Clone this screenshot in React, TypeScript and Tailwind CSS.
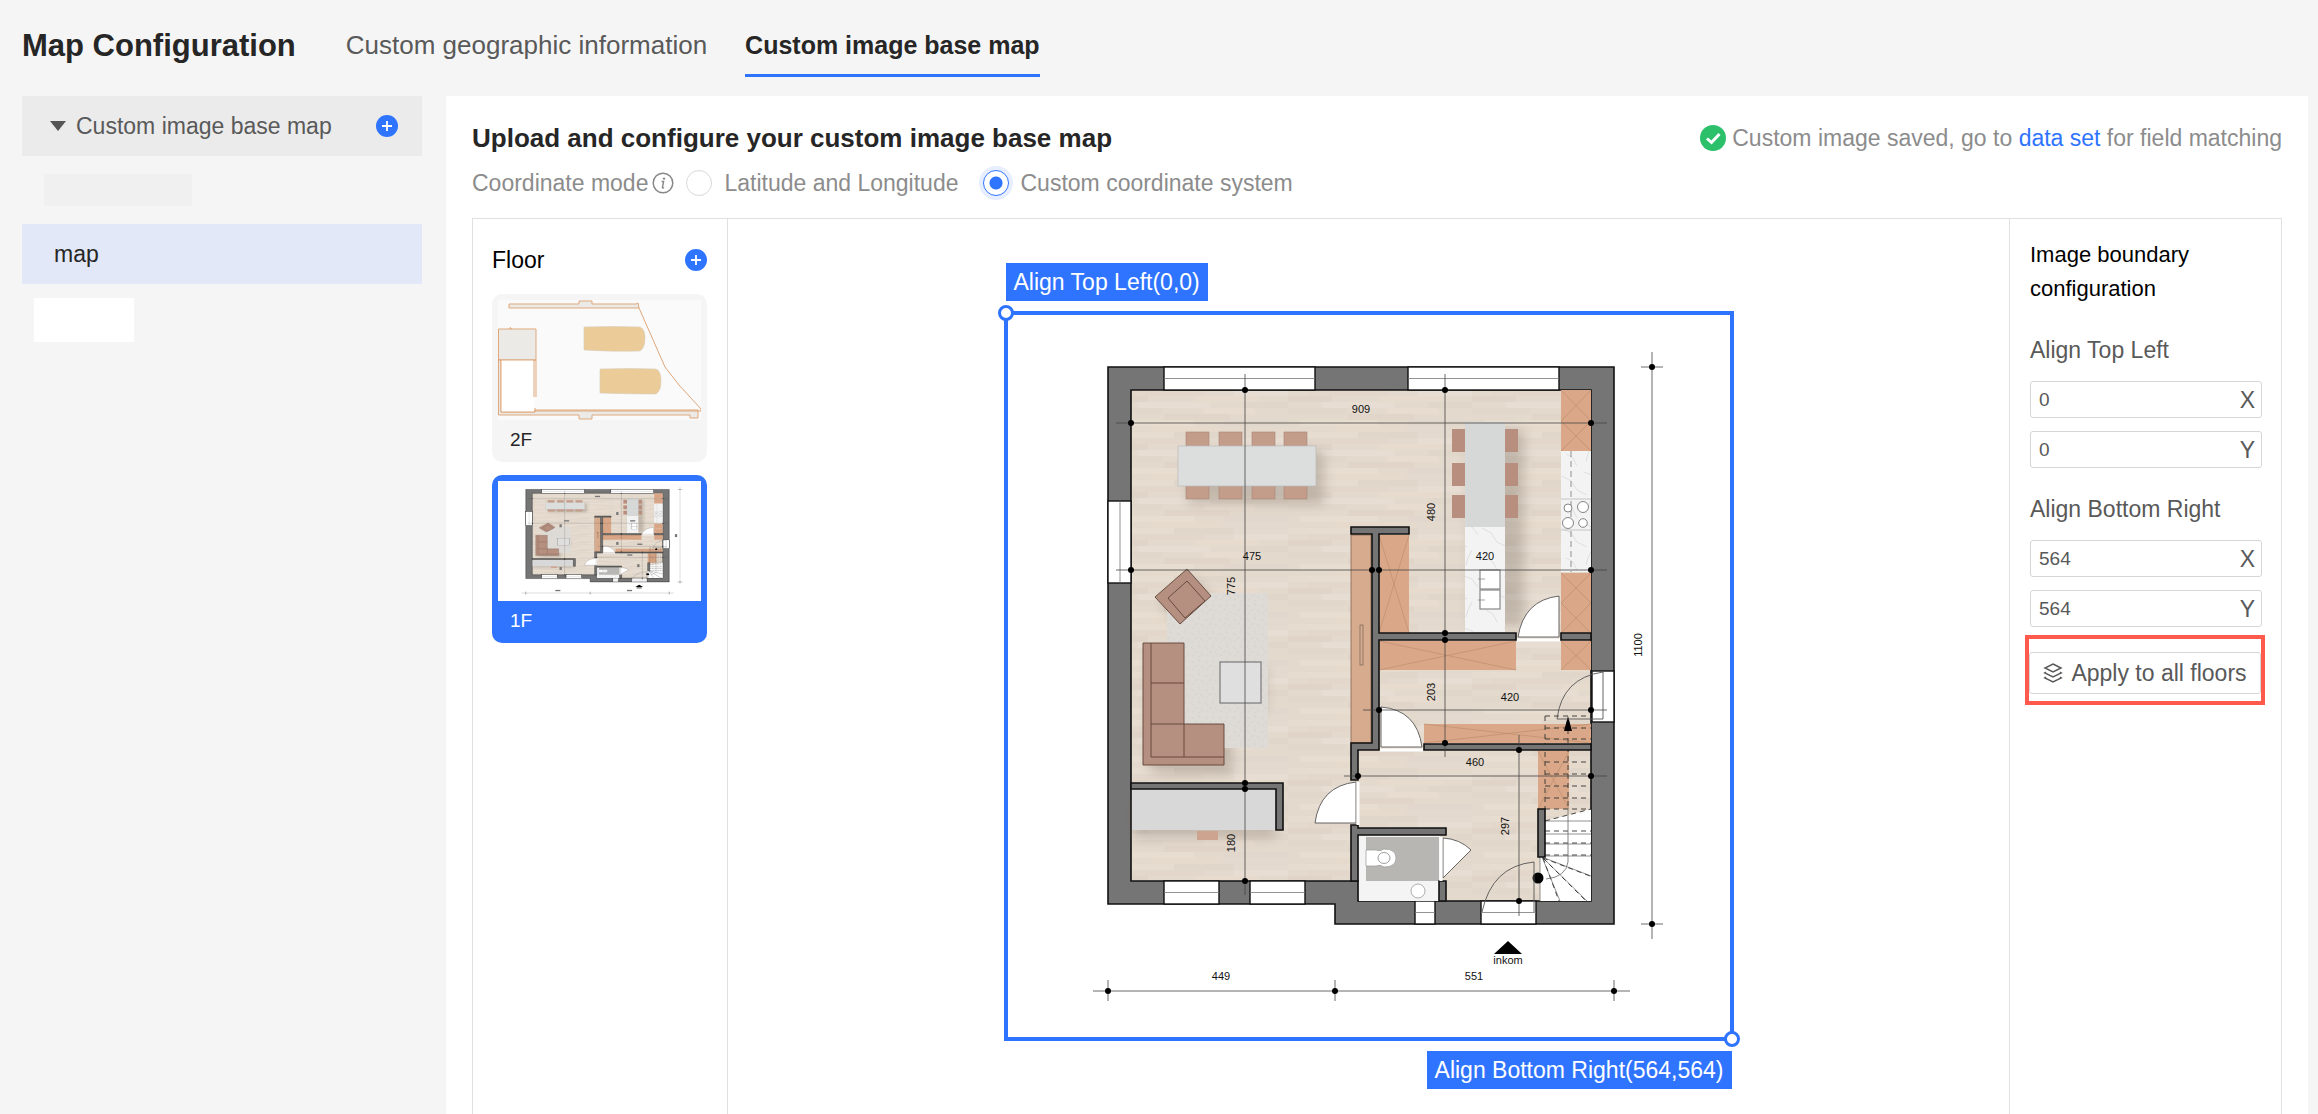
import { useId, useState } from 'react';

const floors = [
  { id: '2', name: '2F' },
  { id: '1', name: '1F' }
];

const planLabels = [
  { x: 1361, y: 413, text: '909' },
  { x: 1252, y: 560, text: '475' },
  { x: 1485, y: 560, text: '420' },
  { x: 1510, y: 701, text: '420' },
  { x: 1475, y: 766, text: '460' },
  { x: 1221, y: 980, text: '449' },
  { x: 1474, y: 980, text: '551' },
  { x: 1235, y: 586, text: '775', vertical: true },
  { x: 1235, y: 843, text: '180', vertical: true },
  { x: 1435, y: 512, text: '480', vertical: true },
  { x: 1435, y: 692, text: '203', vertical: true },
  { x: 1509, y: 826, text: '297', vertical: true },
  { x: 1642, y: 645, text: '1100', vertical: true },
  { x: 1508, y: 964, text: 'inkom' }
];

const planDots = [
  [1131, 423], [1591, 423], [1131, 570], [1372, 570], [1379, 570], [1591, 570],
  [1245, 390], [1245, 783], [1245, 789], [1245, 881],
  [1445, 390], [1445, 633], [1445, 640], [1445, 743],
  [1379, 710], [1591, 710], [1358, 776], [1591, 776], [1519, 750], [1519, 901],
  [1652, 367], [1652, 924], [1108, 991], [1335, 991], [1614, 991]
];

const crossedCabinets = [
  [1379, 535, 30, 98], [1561, 390, 30, 31], [1561, 421, 30, 30], [1561, 573, 30, 30],
  [1561, 603, 30, 30], [1379, 641, 137, 29], [1561, 641, 30, 29], [1424, 724, 167, 19],
  [1538, 751, 31, 58]
];

const horizontalWindows = [
  [1164, 367, 151, 23], [1408, 367, 151, 23], [1164, 881, 55, 23], [1250, 881, 55, 23],
  [1415, 901, 20, 23], [1481, 901, 55, 23]
];

function FloorPlan({ viewBox, thumbnail, className }: { viewBox: string; thumbnail?: boolean; className?: string }) {
  const id = useId();
  const wood = `${id}-wood`;
  const soft = `${id}-soft`;
  const rug = `${id}-rug`;
  const marble = `${id}-marble`;

  return (
    <svg
      viewBox={viewBox}
      preserveAspectRatio={thumbnail ? 'none' : 'xMidYMid meet'}
      className={className}
      role="img"
      aria-label="1F"
    >
      <defs>
        <pattern id={wood} width="184" height="48" patternUnits="userSpaceOnUse">
          <rect width="184" height="48" fill="#e4d9cd" />
          <rect x="0" y="0" width="70" height="6" fill="#e7dcd0" />
          <rect x="70" y="0" width="60" height="6" fill="#e1d6ca" />
          <rect x="20" y="6" width="80" height="6" fill="#e2d7ca" />
          <rect x="130" y="6" width="54" height="6" fill="#e7ddd2" />
          <rect x="0" y="12" width="44" height="6" fill="#e0d4c8" />
          <rect x="90" y="12" width="64" height="6" fill="#e6dbcd" />
          <rect x="34" y="18" width="72" height="6" fill="#e7ddd2" />
          <rect x="140" y="18" width="44" height="6" fill="#e1d6ca" />
          <rect x="0" y="24" width="58" height="6" fill="#e2d7cb" />
          <rect x="100" y="24" width="50" height="6" fill="#e7dccf" />
          <rect x="60" y="30" width="66" height="6" fill="#e1d5c9" />
          <rect x="12" y="36" width="78" height="6" fill="#e7ddd1" />
          <rect x="120" y="36" width="64" height="6" fill="#e2d7cc" />
          <rect x="46" y="42" width="70" height="6" fill="#e5dacc" />
        </pattern>
        <pattern id={rug} width="14" height="14" patternUnits="userSpaceOnUse">
          <rect width="14" height="14" fill="#dedbd7" />
          <path d="M1 3l3 2M8 1l2 3M5 9l3-2M11 8l2 3M2 12l2-1M9 12l1 1" stroke="#d8d5d1" strokeWidth="1.2" />
        </pattern>
        <pattern id={marble} width="40" height="52" patternUnits="userSpaceOnUse">
          <rect width="40" height="52" fill="#f3f3f4" />
          <path d="M2 8l9 5 6 9 10 5M24 4l8 3 6 8M6 38l7 4 4 8M32 30l-4 8-2 7" stroke="#dcdcde" strokeWidth="0.9" fill="none" />
        </pattern>
        <filter id={soft} x="-30%" y="-30%" width="160%" height="160%">
          <feGaussianBlur stdDeviation="6" />
        </filter>
      </defs>

      {/* outer walls and floor */}
      <path d="M1108 367H1614V924H1335V904H1108Z" fill="#757575" stroke="#111" strokeWidth="1.6" />
      <path d="M1131 390H1591V901H1358V881H1131Z" fill={`url(#${wood})`} stroke="#111" strokeWidth="1.6" />

      {/* windows */}
      {horizontalWindows.map(([x, y, w, h]) => (
        <g key={`${x}-${y}`}>
          <rect x={x} y={y} width={w} height={h} fill="#fff" stroke="#111" strokeWidth="1.4" />
          <path d={`M${x} ${y + h / 2}h${w}`} stroke="#777" strokeWidth="0.8" />
        </g>
      ))}
      <rect x="1108" y="501" width="23" height="82" fill="#fff" stroke="#111" strokeWidth="1.4" />
      <path d="M1120 501V583" stroke="#777" strokeWidth="0.8" />
      <rect x="1592" y="671" width="22" height="51" fill="#fff" stroke="#111" strokeWidth="1.4" />

      {/* shadows */}
      <g filter={`url(#${soft})`} fill="#75685c" opacity="0.3">
        <rect x="1188" y="452" width="136" height="52" />
        <rect x="1470" y="430" width="54" height="196" />
        <rect x="1150" y="654" width="40" height="118" />
        <rect x="1160" y="732" width="72" height="42" />
        <rect x="1224" y="668" width="42" height="42" />
        <rect x="1134" y="800" width="142" height="38" />
        <path d="M1192 577L1217 603L1186 631L1160 604Z" />
      </g>

      {/* living room */}
      <rect x="1167" y="593" width="101" height="155" fill={`url(#${rug})`} />
      <g fill="#c39c8a" stroke="#a98575" strokeWidth="0.6">
        {[1186, 1219, 1252, 1284].map((x) => (
          <rect key={x} x={x} y="432" width="23" height="67" />
        ))}
      </g>
      <rect x="1178" y="446" width="138" height="40" fill="#dcdddd" stroke="#bbb" strokeWidth="0.7" />
      <g fill="#b58f7f" stroke="#5d4439" strokeWidth="0.9">
        <path d="M1187 569L1211 596L1180 624L1155 597Z" />
        <path d="M1187 581L1205 601L1185 618L1168 598Z" />
        <path d="M1143 643H1184V724H1224V765H1143Z" />
        <path d="M1151 643V757H1224M1151 683H1184M1151 724H1184M1184 724V757" fill="none" />
      </g>
      <rect x="1220" y="662" width="41" height="41" fill="#dfdfdf" stroke="#666" strokeWidth="1" />
      <rect x="1351" y="535" width="20" height="208" fill="#d6ab8e" stroke="#7a5a44" strokeWidth="0.7" />
      <rect x="1360" y="625" width="3" height="40" fill="none" stroke="#765" strokeWidth="0.7" />
      <rect x="1132" y="790" width="144" height="40" fill="#d8d8d8" />
      <rect x="1197" y="831" width="21" height="9" fill="#cda490" />

      {/* kitchen */}
      <g fill="#b88f7e">
        {[429, 463, 495].map((y) => (
          <g key={y}>
            <rect x="1452" y={y} width="13" height="23" />
            <rect x="1505" y={y} width="13" height="23" />
          </g>
        ))}
      </g>
      <rect x="1465" y="422" width="40" height="105" fill="#d6d7d7" />
      <rect x="1465" y="527" width="40" height="105" fill={`url(#${marble})`} />
      <g fill="#fff" stroke="#888" strokeWidth="1.2">
        <rect x="1480" y="570" width="20" height="19" />
        <rect x="1480" y="590" width="20" height="19" />
        <path d="M1478 579h7M1478 600h7" strokeWidth="0.8" />
      </g>
      <rect x="1561" y="451" width="30" height="121" fill={`url(#${marble})`} />
      <path d="M1561 499h30M1561 530h30" stroke="#aaa" strokeWidth="0.6" />
      <path d="M1571 451V572" stroke="#777" strokeWidth="0.8" strokeDasharray="6 4" />
      <g fill="#fff" stroke="#777" strokeWidth="0.9">
        <circle cx="1568" cy="508" r="4" />
        <circle cx="1583" cy="507" r="5.5" />
        <circle cx="1568" cy="523" r="5.5" />
        <circle cx="1583" cy="523" r="4.3" />
      </g>
      {crossedCabinets.map(([x, y, w, h]) => (
        <g key={`${x}-${y}`}>
          <rect x={x} y={y} width={w} height={h} fill="#daa888" />
          <path d={`M${x} ${y}l${w} ${h}M${x + w} ${y}l${-w} ${h}`} stroke="#b08465" strokeWidth="0.5" />
        </g>
      ))}

      {/* toilet */}
      <rect x="1359" y="836" width="81" height="65" fill="#f4f4f4" />
      <rect x="1366" y="837" width="73" height="44" fill="#b7b6b2" />
      <path d="M1366 850h10q4 2 8-1q12 0 12 9t-12 9q-4-3-8-1h-10z" fill="#fff" stroke="#999" strokeWidth="0.7" />
      <ellipse cx="1384" cy="858" rx="6" ry="5.5" fill="#fff" stroke="#888" strokeWidth="0.8" />
      <circle cx="1418" cy="891" r="7" fill="#fff" stroke="#999" strokeWidth="0.8" />

      {/* stairs */}
      <path d="M1545 821L1591 809V901H1540V857H1545Z" fill="#fff" />
      <path d="M1545 821H1591M1545 834H1591M1545 844H1591M1545 856H1591M1542 857L1591 876M1542 857L1587 901M1542 857L1560 901M1540 857V901" stroke="#777" strokeWidth="0.8" />
      <path
        d="M1545 716H1591M1545 728H1591M1545 739H1591M1545 762H1591M1545 774H1591M1545 786H1591M1545 798H1591M1545 809H1591M1545 716V809M1568 729V809M1545 821L1591 809M1545 831H1591M1545 843H1591M1545 855H1591M1543 858L1590 876M1543 858L1586 901M1543 858L1559 901"
        stroke="#333"
        strokeWidth="0.9"
        strokeDasharray="5 4"
        fill="none"
      />
      <path d="M1568 809V862Q1566 877 1546 879" stroke="#666" strokeWidth="0.8" fill="none" />
      <path d="M1568 716L1572 731H1564Z" fill="#000" />

      {/* inner walls */}
      <path
        d="M1351 527H1409V534H1379V633H1516V640H1379V750H1358V780H1351V743H1372V534H1351ZM1561 633H1591V640H1561ZM1424 744H1591V750H1424ZM1538 809H1545V857H1538ZM1131 783H1283V830H1276V789H1131ZM1351 825H1358V828H1446V835H1358V881H1351ZM1439 881H1446V901H1439Z"
        fill="#757575"
        stroke="#111"
        strokeWidth="1.6"
      />
      <circle cx="1538" cy="878" r="5.5" fill="#000" />

      {/* doors */}
      <g fill="#fff" stroke="#555" strokeWidth="0.9">
        <path d="M1559 637V596Q1524 600 1518 637Z" />
        <path d="M1381 747V707Q1417 710 1422 747Z" />
        <path d="M1356 823V782Q1320 786 1315 823Z" />
        <path d="M1443 838Q1460 839 1471 850L1443 878Z" />
      </g>
      <path d="M1517 640H1560M1380 750H1423M1358 782V825M1441 837V881" stroke="#fff" strokeWidth="3" />
      <g fill="none" stroke="#555" strokeWidth="0.9">
        <path d="M1534 912V862Q1492 866 1482 912" />
        <path d="M1603 671V719H1557Q1562 678 1603 672" />
      </g>

      {/* dimension lines */}
      <path
        d="M1116 423H1607M1116 570H1607M1363 710H1607M1344 776H1607M1245 374V895M1445 374V757M1519 735V916M1652 352V939M1641 367H1663M1641 924H1663M1093 991H1630M1108 980V1001M1335 980V1001M1614 980V1001"
        stroke="#444"
        strokeWidth="0.8"
      />
      {planDots.map(([x, y]) => (
        <circle key={`${x}-${y}`} cx={x} cy={y} r={thumbnail ? 2 : 3} fill="#000" />
      ))}
      <path d="M1508 941L1522 954H1494Z" fill="#000" />

      {planLabels.map((label) =>
        thumbnail ? (
          <rect
            key={`${label.x}-${label.y}`}
            x={label.x - (label.vertical ? 8 : 9)}
            y={label.y - (label.vertical ? 9 : 8)}
            width={label.vertical ? 8 : 18}
            height={label.vertical ? 18 : 8}
            fill="#777"
          />
        ) : (
          <text
            key={`${label.x}-${label.y}`}
            x={label.x}
            y={label.y}
            textAnchor="middle"
            fontSize="11"
            fill="#111"
            transform={label.vertical ? `rotate(-90 ${label.x} ${label.y})` : undefined}
          >
            {label.text}
          </text>
        )
      )}
    </svg>
  );
}

function GaragePlan({ className }: { className?: string }) {
  return (
    <svg viewBox="0 0 203 120" className={className} role="img" aria-label="2F">
      <rect width="203" height="120" fill="#fafafa" />
      <g fill="#ebeae7" stroke="#dfa77a" strokeWidth="1">
        <path d="M11 4H81V1H94V4H138L140 3L141 8H11Z" />
        <path d="M0.5 29H38V60H0.5Z" />
        <path d="M0.5 60V115H81V119H94V115H192V118H200V110H37V112H3V60Z" />
      </g>
      <path d="M3 60H36V112H3Z" fill="#fff" />
      <path d="M0.5 60H38V97M36 60V97M3 60V112H37V108M11 29Q12 26 14 29M141 8L167 67L181 85L203 109V111H37" stroke="#dfa77a" strokeWidth="1" fill="none" />
      <g fill="#ebcb98" stroke="#d9cdbb" strokeWidth="0.6">
        <path d="M86 27Q116 26 142 27Q147 29 147 38Q147 48 142 51Q116 52 86 50Z" />
        <path d="M102 69Q132 68 158 69Q163 71 163 81Q163 91 158 94Q132 94 102 93Z" />
      </g>
    </svg>
  );
}

function PlusIcon() {
  return (
    <svg viewBox="0 0 22 22" className="size-[22px]" aria-hidden="true">
      <circle cx="11" cy="11" r="11" fill="#2f74ff" />
      <path d="M11 6V16M6 11H16" stroke="#fff" strokeWidth="1.8" />
    </svg>
  );
}

function CoordinateInput({ id, axis, defaultValue }: { id: string; axis: string; defaultValue: string }) {
  return (
    <div className="flex h-[37px] items-center rounded-[3px] border border-[#d6d6d6] pr-[6px] pl-2">
      <input
        id={id}
        defaultValue={defaultValue}
        className="min-w-0 flex-1 bg-transparent text-[19px] leading-6 text-[#595959] outline-none"
      />
      <label htmlFor={id} className="text-[23px] leading-6">{axis}</label>
    </div>
  );
}

export default function App() {
  const [mode, setMode] = useState('custom');
  const [activeFloor, setActiveFloor] = useState('1');

  const radioClass =
    'size-[26px] shrink-0 appearance-none rounded-full border border-[#d9d9d9] bg-white checked:border-[#2f74ff] checked:bg-[radial-gradient(circle,#2f74ff_6px,#fff_7px)] checked:ring-4 checked:ring-[#e6eeff]';

  return (
    <div className="flex min-h-screen flex-col bg-[#f5f5f5] font-['Liberation_Sans',Arial,sans-serif] text-[23px] leading-8 text-[#595959]">
      <header className="flex h-24 items-start pl-[22px]">
        <h1 className="mt-[22px] text-[31px] leading-[48px] font-bold text-[#262626]">Map Configuration</h1>
        <nav className="ml-[50px] flex gap-[38px] text-[26px] leading-[46px]">
          <a href="#geographic" className="mt-[22px]">Custom geographic information</a>
          <a href="#image" className="border-b-[3px] border-[#2f74ff] pt-[22px] pb-[6px] text-[25px] font-bold text-[#262626]">
            Custom image base map
          </a>
        </nav>
      </header>

      <div className="flex flex-1">
        {/* sidebar */}
        <aside className="ml-[22px] w-[400px] shrink-0">
          <div className="flex h-[60px] items-center bg-[#ebebeb] pr-6 pl-7">
            <button className="flex items-center gap-[10px]">
              <svg viewBox="0 0 16 10" className="h-[10px] w-4" aria-hidden="true">
                <path d="M0 0H16L8 10Z" fill="#555" />
              </svg>
              Custom image base map
            </button>
            <button aria-label="Add base map" className="ml-auto">
              <PlusIcon />
            </button>
          </div>
          <div className="mt-[18px] ml-[22px] h-8 w-[148px] bg-[#f0f0f0]" />
          <button className="mt-[18px] flex h-[60px] w-full items-center bg-[#e2e8f8] pl-8 text-[#262626]">map</button>
          <div className="mt-[14px] ml-3 h-11 w-[100px] bg-white" />
        </aside>

        {/* main panel */}
        <main className="mr-[10px] ml-6 flex min-w-0 flex-1 flex-col bg-white px-[26px] pt-6">
          <div className="flex items-center justify-between">
            <h2 className="text-[26px] leading-9 font-bold text-[#262626]">
              Upload and configure your custom image base map
            </h2>
            <p className="flex items-center gap-[6px] text-[#8c8c8c]">
              <svg viewBox="0 0 26 26" className="size-[26px]" aria-hidden="true">
                <circle cx="13" cy="13" r="13" fill="#2bc069" />
                <path d="M7 13.5L11.5 17.5L19.5 9" stroke="#fff" strokeWidth="3" fill="none" />
              </svg>
              <span>
                Custom image saved, go to <a href="#dataset" className="text-[#2f74ff]">data set</a> for field matching
              </span>
            </p>
          </div>

          <div className="mt-[10px] flex h-[34px] items-center text-[#8c8c8c]">
            <span>Coordinate mode</span>
            <svg viewBox="0 0 22 22" className="mr-3 ml-1 size-[22px]" aria-hidden="true">
              <circle cx="11" cy="11" r="9.8" fill="none" stroke="#888" strokeWidth="1.5" />
              <path d="M9.6 9.5H11.6L10.4 15.5Q10.6 16.5 12 15.5" fill="none" stroke="#888" strokeWidth="1.4" />
              <circle cx="12" cy="6.6" r="1.2" fill="#888" />
            </svg>
            <label className="flex items-center gap-3">
              <input type="radio" name="mode" className={radioClass} checked={mode === 'latlng'} onChange={() => setMode('latlng')} />
              Latitude and Longitude
            </label>
            <label className="ml-6 flex items-center gap-3">
              <input type="radio" name="mode" className={radioClass} checked={mode === 'custom'} onChange={() => setMode('custom')} />
              Custom coordinate system
            </label>
          </div>

          <div className="mt-[18px] flex flex-1 border border-b-0 border-[#e0e0e0]">
            {/* floors */}
            <section className="w-[255px] shrink-0 border-r border-[#e0e0e0] pt-6 pr-5 pl-[19px]">
              <div className="mb-[17px] flex h-[34px] items-center justify-between text-black">
                <h3>Floor</h3>
                <button aria-label="Add floor">
                  <PlusIcon />
                </button>
              </div>
              <div className="flex flex-col gap-[13px]">
                {floors.map((floor) => (
                  <button
                    key={floor.id}
                    onClick={() => setActiveFloor(floor.id)}
                    className={`h-[168px] rounded-[10px] p-[6px] text-left text-[19px] ${
                      activeFloor === floor.id ? 'bg-[#2f74ff] text-white' : 'bg-[#f5f5f5] text-[#262626]'
                    }`}
                  >
                    {floor.id === '2' ? (
                      <GaragePlan className="h-[120px] w-full" />
                    ) : (
                      <FloorPlan thumbnail viewBox="1010 316 716 723" className="h-[120px] w-full bg-white" />
                    )}
                    <span className="mt-1 block pl-3">{floor.name}</span>
                  </button>
                ))}
              </div>
            </section>

            {/* canvas */}
            <section className="flex min-w-0 flex-1 justify-center pt-[92px]">
              <div className="relative size-[730px] border-4 border-[#2f74ff]">
                <FloorPlan viewBox="1008 315 722 722" className="size-full" />
                <span className="absolute -top-[52px] -left-[2px] h-[38px] bg-[#2f74ff] px-2 leading-[38px] whitespace-nowrap text-white">
                  Align Top Left(0,0)
                </span>
                <span className="absolute -top-[10px] -left-[10px] size-4 rounded-full border-3 border-[#2f74ff] bg-white" />
                <span className="absolute -right-[10px] -bottom-[10px] size-4 rounded-full border-3 border-[#2f74ff] bg-white" />
                <span className="absolute -right-[2px] -bottom-[52px] h-[38px] bg-[#2f74ff] px-2 leading-[38px] whitespace-nowrap text-white">
                  Align Bottom Right(564,564)
                </span>
              </div>
            </section>

            {/* boundary settings */}
            <aside className="w-[272px] shrink-0 border-l border-[#e0e0e0] pt-[19px] pr-[19px] pl-5">
              <h3 className="text-[22px] leading-[34px] text-black">Image boundary configuration</h3>
              <h4 className="mt-7 mb-[15px]">Align Top Left</h4>
              <div className="flex flex-col gap-[13px]">
                <CoordinateInput id="top-left-x" axis="X" defaultValue="0" />
                <CoordinateInput id="top-left-y" axis="Y" defaultValue="0" />
              </div>
              <h4 className="mt-[25px] mb-[15px]">Align Bottom Right</h4>
              <div className="flex flex-col gap-[13px]">
                <CoordinateInput id="bottom-right-x" axis="X" defaultValue="564" />
                <CoordinateInput id="bottom-right-y" axis="Y" defaultValue="564" />
              </div>
              <div className="-mr-[3px] -ml-[5px] mt-2 border-4 border-[#ff5a4c] pt-[13px] pb-[7px]">
                <button className="flex h-[42px] w-full items-center justify-center gap-2 rounded-[3px] border border-[#d6d6d6]">
                  <svg viewBox="0 0 20 20" className="size-5" fill="none" stroke="#595959" strokeWidth="1.5" aria-hidden="true">
                    <path d="M10 1L18 5L10 9L2 5Z" />
                    <path d="M3 9.2L1.8 10L10 14L18.2 10L17 9.2" />
                    <path d="M3 14L1.8 14.8L10 18.8L18.2 14.8L17 14" />
                  </svg>
                  Apply to all floors
                </button>
              </div>
            </aside>
          </div>
        </main>
      </div>
    </div>
  );
}
